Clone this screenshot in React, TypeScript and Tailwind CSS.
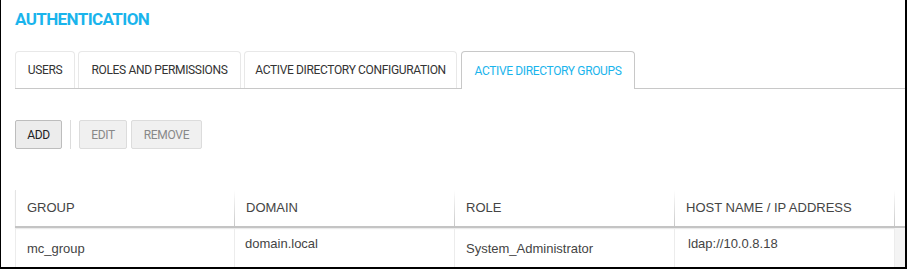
import { useState } from "react";

const tabs = [
  { label: "USERS", w: "w-[60px]" },
  { label: "ROLES AND PERMISSIONS", w: "w-[163px]" },
  { label: "ACTIVE DIRECTORY CONFIGURATION", w: "w-[213px]" },
  { label: "ACTIVE DIRECTORY GROUPS", w: "w-[174px]" },
];

const columns = ["GROUP", "DOMAIN", "ROLE", "HOST NAME / IP ADDRESS"];

const rows = [
  {
    group: "mc_group",
    domain: "domain.local",
    role: "System_Administrator",
    host: "ldap://10.0.8.18",
  },
];

export default function App() {
  const [active, setActive] = useState(3);

  return (
    <div className="w-[907px] h-[269px] overflow-hidden bg-white border-l border-r-2 border-b-2 border-black">
      <div className="pl-[14px] pr-0">
        {/* Title */}
        <h1 className="pt-[9px] h-[51px] text-[17px] leading-[20px] font-bold text-[#1ab4ec] font-['Roboto',sans-serif] tracking-[-0.6px]">
          AUTHENTICATION
        </h1>

        {/* Tabs */}
        <div className="flex items-end gap-[3px] h-[38px] border-b border-[#c8c8c8] font-['Roboto',sans-serif] text-[12px] tracking-[-0.35px]">
          {tabs.map((t, i) => (
            <button
              key={t.label}
              onClick={() => setActive(i)}
              className={
                t.w +
                " " +
                (i === active
                  ? "h-[38px] -mb-px rounded-t-[4px] border border-b-0 border-[#c8c8c8] bg-white text-[#1ab4ec] ml-[1px]"
                  : "h-[37px] rounded-t-[4px] border border-b-0 border-[#e8e8e8] bg-white text-[#333]")
              }
            >
              {t.label}
            </button>
          ))}
        </div>

        {/* Toolbar */}
        <div className="flex items-center mt-[31px] h-[29px] font-['Roboto',sans-serif] text-[12px] tracking-[-0.3px]">
          <button className="h-[29px] w-[47px] rounded-[2px] border border-[#bdbdbd] bg-[#ececec] text-[#222]">
            ADD
          </button>
          <div className="w-px h-[29px] bg-[#dcdcdc] mx-[8px]" />
          <button className="h-[29px] w-[48px] rounded-[2px] border border-[#dcdcdc] bg-[#f0f0f0] text-[#888]">
            EDIT
          </button>
          <button className="h-[29px] w-[71px] ml-[4px] rounded-[2px] border border-[#dcdcdc] bg-[#f0f0f0] text-[#888]">
            REMOVE
          </button>
        </div>

        {/* Table */}
        <div className="mt-[41px] font-['Liberation_Sans',Arial,sans-serif] text-[13px] text-[#444]">
          <div className="flex h-[38px] border-b-2 border-[#c4c4c4] shadow-[0_1px_1px_rgba(0,0,0,0.08)]">
            {columns.map((c, i) => (
              <div
                key={c}
                className={
                  "relative w-[220px] flex items-center pl-[11px] " +
                  (i === 0 ? "border-l border-[#e4e4e4]" : "")
                }
              >
                {c}
                <div className="absolute right-0 top-0 h-full w-px bg-gradient-to-b from-white to-[#c8c8c8]" />
              </div>
            ))}
          </div>
          {rows.map((r) => (
            <div key={r.group} className="flex h-[40px]">
              <div className="w-[220px] pl-[11px] pt-[11px] border-l border-r border-[#ececec]">
                {r.group}
              </div>
              <div className="w-[220px] pl-[10px] pt-[6px] border-r border-[#ececec]">
                {r.domain}
              </div>
              <div className="w-[220px] pl-[11px] pt-[11px] border-r border-[#ececec]">
                {r.role}
              </div>
              <div className="w-[220px] pl-[13px] pt-[6px] border-r border-[#ececec]">
                {r.host}
              </div>
              <div className="flex-1 bg-[#f4f4f4]" />
            </div>
          ))}
        </div>
      </div>
    </div>
  );
}
